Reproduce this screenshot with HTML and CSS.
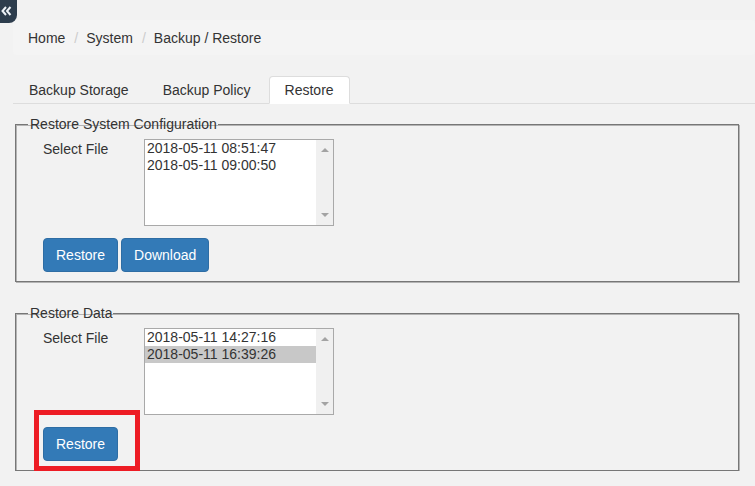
FILE: index.html
```html
<!DOCTYPE html>
<html>
<head>
<meta charset="utf-8">
<link rel="stylesheet" href="styles.css">
</head>
<body>
<div class="toggle">
  <svg width="17" height="23" viewBox="0 0 17 23">
    <path d="M6 7 L2.5 11 L6 15 M10.5 7 L7 11 L10.5 15" fill="none" stroke="#eef3f8" stroke-width="2"/>
  </svg>
</div>
<div class="page">
  <div class="breadcrumb">
    <span class="crumb">Home</span><span class="sep">/</span><span class="crumb">System</span><span class="sep">/</span><span class="crumb">Backup / Restore</span>
  </div>
  <ul class="tabs">
    <li class="tab">Backup Storage</li>
    <li class="tab">Backup Policy</li>
    <li class="tab active">Restore</li>
  </ul>
  <fieldset class="group">
    <legend>Restore System Configuration</legend>
    <div class="row">
      <div class="label">Select File</div>
      <div class="listbox">
        <div class="options">
          <div class="option">2018-05-11 08:51:47</div>
          <div class="option">2018-05-11 09:00:50</div>
        </div>
        <div class="scrollbar"><span class="arrow up"></span><span class="arrow down"></span></div>
      </div>
    </div>
    <div class="actions">
      <button class="btn">Restore</button>
      <button class="btn">Download</button>
    </div>
  </fieldset>
  <fieldset class="group second">
    <legend>Restore Data</legend>
    <div class="row">
      <div class="label">Select File</div>
      <div class="listbox">
        <div class="options">
          <div class="option">2018-05-11 14:27:16</div>
          <div class="option selected">2018-05-11 16:39:26</div>
        </div>
        <div class="scrollbar"><span class="arrow up"></span><span class="arrow down"></span></div>
      </div>
    </div>
    <div class="actions">
      <button class="btn">Restore</button>
    </div>
  </fieldset>
</div>
<div class="highlight"></div>
</body>
</html>
```
FILE: styles.css
```css
html, body {
  margin: 0;
  padding: 0;
  background: #f2f2f2;
  font-family: "Liberation Sans", Arial, sans-serif;
  font-size: 14px;
  color: #333;
}

.toggle {
  position: absolute;
  left: 0;
  top: 0;
  width: 17px;
  height: 23px;
  background: #2d3d4d;
  border-bottom-right-radius: 8px;
}
.toggle svg { display: block; }

.page {
  padding: 20px 0 0 13px;
}

.breadcrumb {
  height: 35px;
  line-height: 36px;
  padding: 0 15px;
  background: #f4f4f4;
  border-radius: 4px;
}
.sep {
  color: #ccc;
  padding: 0 8px 0 9px;
}

.tabs {
  list-style: none;
  margin: 21px 0 0 0;
  padding: 0;
  display: flex;
  border-bottom: 1px solid #ddd;
}
.tab {
  margin: 0 2px -1px 0;
  padding: 4px 15px;
  line-height: 18px;
  border: 1px solid transparent;
  border-radius: 4px 4px 0 0;
}
.tab.active {
  background: #fff;
  border-color: #ddd;
  border-bottom-color: transparent;
}

.group {
  margin: 12px 16px 0 2px;
  padding: 0 0 9px 12px;
  border: 1px solid #777;
  box-shadow: 1px 1px 0 #b4b4b4, inset 1px 1px 0 #b4b4b4;
  min-width: 0;
}
.group.second {
  margin-top: 23px;
}
.group legend {
  padding: 0 1px 0 2px;
  line-height: 16px;
}

.row {
  display: flex;
  margin-top: 7px;
  padding-left: 15px;
}
.label {
  width: 101px;
  line-height: 20px;
}
.listbox {
  width: 188px;
  height: 85px;
  border: 1px solid #a9a9a9;
  background: #fff;
  display: flex;
}
.options {
  flex: 1;
}
.option {
  height: 17px;
  line-height: 17px;
  padding: 0 2px;
  white-space: nowrap;
}
.option.selected {
  background: #c8c8c8;
}
.scrollbar {
  width: 17px;
  background: #f0f0f0;
  display: flex;
  flex-direction: column;
  justify-content: space-between;
  align-items: center;
  padding: 8px 0 8px 0;
  box-sizing: border-box;
}
.arrow {
  width: 0;
  height: 0;
  border-left: 4px solid transparent;
  border-right: 4px solid transparent;
}
.arrow.up { border-bottom: 4px solid #a3a3a3; }
.arrow.down { border-top: 4px solid #a3a3a3; }

.actions {
  display: flex;
  gap: 3px;
  margin-top: 12px;
  padding-left: 15px;
}
.btn {
  font-family: inherit;
  font-size: 14px;
  line-height: 20px;
  padding: 6px 12px;
  color: #fff;
  background: #337ab7;
  border: 1px solid #2e6da4;
  border-radius: 4px;
  cursor: pointer;
}

.highlight {
  position: absolute;
  left: 34px;
  top: 410px;
  width: 106px;
  height: 61px;
  box-sizing: border-box;
  border: 5px solid #ed1c24;
}
```
